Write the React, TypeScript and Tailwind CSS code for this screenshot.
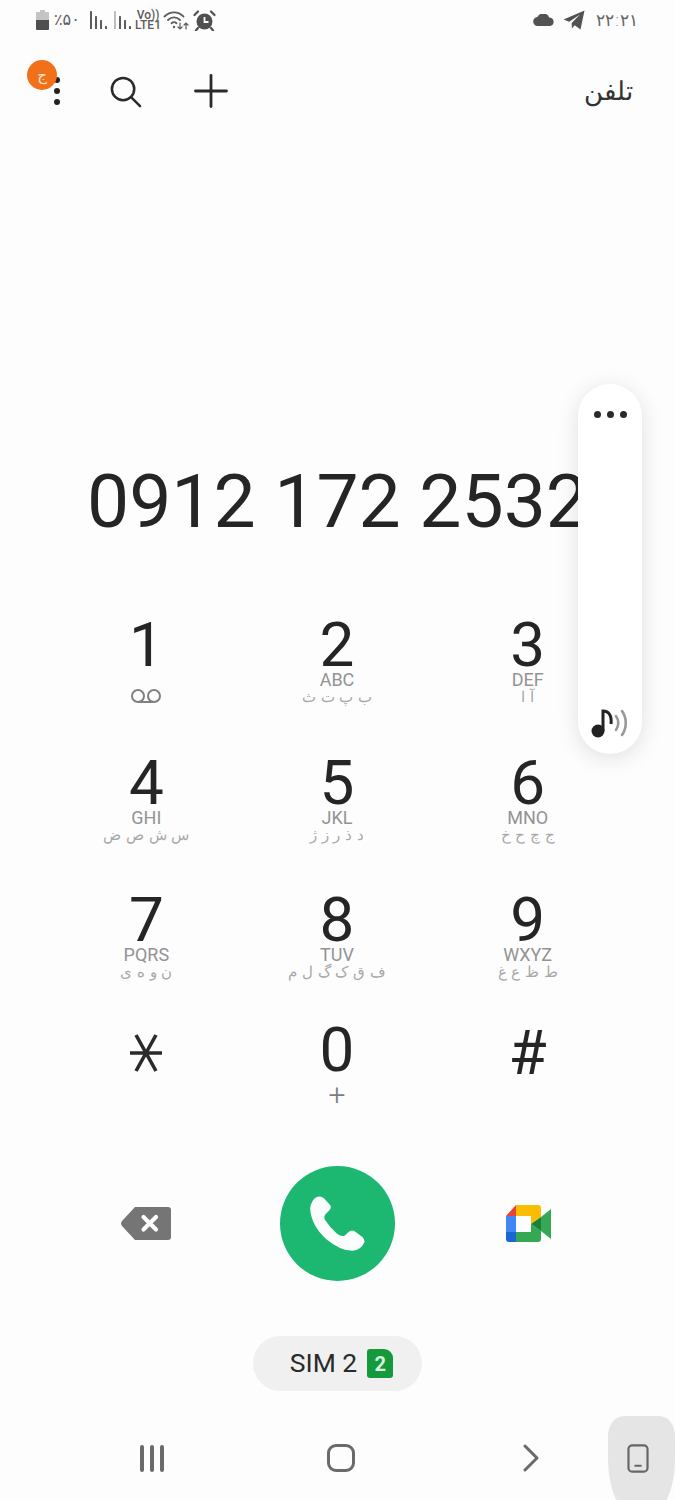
import React from "react";

const sans = "font-['Roboto','Liberation_Sans',sans-serif]";
const arabic = "font-['DejaVu_Sans','Noto_Sans',sans-serif]";

function Battery() {
  return (
    <svg width="16" height="20" viewBox="0 0 16 20">
      <path d="M5 0h5v2h3a1 1 0 0 1 1 1v7H1V3a1 1 0 0 1 1-1h3z" fill="#c4c4c4" />
      <path d="M1 10h13v9a1 1 0 0 1-1 1H2a1 1 0 0 1-1-1z" fill="#4f4f4f" />
    </svg>
  );
}

function Signal({ light }: { light?: boolean }) {
  return (
    <svg width="19" height="18" viewBox="0 0 19 18" fill="#5c5c5c">
      <rect x="1" y="0" width="2" height="18" fill={light ? "#bdbdbd" : "#5c5c5c"} rx="0.5" />
      <rect x="6" y="5" width="2" height="13" rx="0.5" />
      <rect x="11" y="9" width="2" height="9" rx="0.5" />
      <rect x="16" y="15" width="2" height="3" rx="0.5" />
    </svg>
  );
}

function Wifi() {
  return (
    <svg width="26" height="20" viewBox="0 0 26 20" fill="none" stroke="#5c5c5c" strokeLinecap="round">
      <path d="M1.500 6.500C7 1 15 1 20.500 6.500" strokeWidth="1.800" />
      <path d="M5 10c3.500-3.400 8.500-3.400 12 0" strokeWidth="1.800" />
      <path d="M8.500 13.200c1.600-1.400 3.400-1.400 5 0" strokeWidth="1.800" />
      <circle cx="11" cy="17" r="1.200" fill="#5c5c5c" stroke="none" />
      <path d="M17 13v6M15 17l2 2 2-2" strokeWidth="1.200" />
      <path d="M23 19v-6M21 15l2-2 2 2" strokeWidth="1.200" />
    </svg>
  );
}

function Alarm() {
  return (
    <svg width="23" height="21" viewBox="0 0 23 21">
      <circle cx="11.500" cy="11.500" r="8" fill="#505050" />
      <path d="M11.500 7v5h4" fill="none" stroke="#fff" strokeWidth="1.800" />
      <path d="M1.500 5 5 1.500M21.500 5 18 1.500M5 18l-2 2.500M18 18l2 2.500" stroke="#505050" strokeWidth="2.200" strokeLinecap="round" />
    </svg>
  );
}

function Cloud() {
  return (
    <svg width="22" height="12" viewBox="0 0 22 12" fill="#525252">
      <path d="M5 12a4.500 4.500 0 0 1-.6-9A6.500 6.500 0 0 1 16.200 3.400 4.400 4.400 0 0 1 17.500 12z" />
    </svg>
  );
}

function Telegram() {
  return (
    <svg width="22" height="20" viewBox="0 0 22 20" fill="#525252">
      <path d="M21.500 .5 17.500 19.500 11.700 15.300 8.900 18.500 8.700 13 17 4.500 6.200 11.700 .5 9.600z" />
    </svg>
  );
}

function Voicemail() {
  return (
    <svg width="32" height="14" viewBox="0 0 32 14" fill="none" stroke="#808080" strokeWidth="2">
      <circle cx="8" cy="7" r="6" />
      <circle cx="24" cy="7" r="6" />
      <path d="M8 13h16" />
    </svg>
  );
}

function Star() {
  return (
    <svg className="mt-[5px]" width="32" height="38" viewBox="0 0 32 38" fill="none" stroke="#2a2a2a" strokeWidth="3.600">
      <path d="M6 1 26 37M26 1 6 37M0 19h32" />
    </svg>
  );
}

function Backspace() {
  return (
    <svg className="mr-[2px]" width="50" height="33" viewBox="0 0 50 33">
      <path d="M14 0h33a3 3 0 0 1 3 3v27a3 3 0 0 1-3 3H14L1 19a4 4 0 0 1 0-5z" fill="#757575" />
      <path d="M22.500 10 35 22.500M35 10 22.500 22.500" stroke="#fff" strokeWidth="4.200" strokeLinecap="round" />
    </svg>
  );
}

function Handset() {
  return (
    <svg className="mr-[2px]" width="62" height="62" viewBox="620 130 180 180" fill="#fbfdfc">
      <path d="M650 142Q635 150 632 175Q635 225 680 265Q720 298 755 298Q780 295 790 272Q790 262 780 255L760 240Q750 236 742 245L732 254Q722 257 710 248Q690 232 675 208Q670 198 678 190L688 180Q695 172 690 165L672 145Q662 137 650 142Z" />
    </svg>
  );
}

function Meet() {
  return (
    <svg width="46" height="38" viewBox="0 0 46 38">
      <path d="M0 11 10 0V11z" fill="#ea4335" />
      <path d="M0 11h10v16H0z" fill="#4285f4" />
      <path d="M0 27h10v10H3a3 3 0 0 1-3-3z" fill="#1967d2" />
      <path d="M10 0h22a3 3 0 0 1 3 3v9L25 19v-8H10z" fill="#fbbc04" />
      <path d="M10 27h15v-8l10 7v8a3 3 0 0 1-3 3H10z" fill="#34a853" />
      <path d="M25 19 35 12v14z" fill="#188038" />
      <path d="M35 12 45 4v30L35 26z" fill="#34a853" />
    </svg>
  );
}

function SimChip() {
  return (
    <div className="relative flex h-[29px] w-[26px] items-center justify-center rounded-[3px] rounded-tr-[9px] bg-[#149a3c]">
      <span className={`${sans} text-[20px] leading-none font-bold text-[#d8f3de]`}>2</span>
    </div>
  );
}

type K = { d: React.ReactNode; en?: string; fa?: string; sub?: React.ReactNode };

function Key({ d, en, fa, sub }: K) {
  return (
    <div className="flex flex-col items-center">
      <div className={`${sans} flex h-[62px] items-center text-[62px] leading-[62px] font-normal text-[#252525]`}>{d}</div>
      {en && <div className={`${sans} -mt-[5px] h-[18px] text-[18px] leading-[18px] font-normal text-[#939393]`}>{en}</div>}
      {fa && (
        <div dir="rtl" className={`${arabic} h-[16px] text-[15px] leading-[16px] font-extralight text-[#a8a8a8] whitespace-nowrap`}>
          {fa}
        </div>
      )}
      {sub}
    </div>
  );
}

const rows: { h: string; keys: K[] }[] = [
  {
    h: "h-[138px]",
    keys: [
      { d: "1", sub: <div className="mt-[13px]"><Voicemail /></div> },
      { d: "2", en: "ABC", fa: "ب پ ت ث" },
      { d: "3", en: "DEF", fa: "آ ا" },
    ],
  },
  {
    h: "h-[137px]",
    keys: [
      { d: "4", en: "GHI", fa: "س ش ص ض" },
      { d: "5", en: "JKL", fa: "د ذ ر ز ژ" },
      { d: "6", en: "MNO", fa: "ج چ ح خ" },
    ],
  },
  {
    h: "h-[130px]",
    keys: [
      { d: "7", en: "PQRS", fa: "ن و ه ی" },
      { d: "8", en: "TUV", fa: "ف ق ک گ ل م" },
      { d: "9", en: "WXYZ", fa: "ط ظ ع غ" },
    ],
  },
  {
    h: "h-[140px]",
    keys: [
      { d: <Star /> },
      {
        d: "0",
        sub: <div className={`${sans} -mt-[1px] text-[30px] leading-[30px] font-light text-[#7c7c7c]`}>+</div>,
      },
      { d: <span className="mt-[6px]">#</span> },
    ],
  },
];

export default function App() {
  return (
    <div className="relative flex h-[1500px] w-[675px] flex-col overflow-hidden bg-[#fdfdfd]">
      {/* status bar */}
      <div className="flex h-[40px] items-center justify-between pr-[37px] pl-[35px]">
        <div className="flex items-center">
          <Battery />
          <span className={`${arabic} ml-[3px] w-[32px] text-left text-[16px] leading-none text-[#5c5c5c]`}>
            <bdi dir="rtl">٪۵۰</bdi>
          </span>
          <div className="ml-[3px]"><Signal /></div>
          <div className="ml-[5px]"><Signal light /></div>
          <div className={`${sans} ml-[3px] flex w-[26px] flex-col items-center text-[12px] leading-[10px] font-medium text-[#5c5c5c]`}>
            <span>Vo))</span>
            <span>LTE1</span>
          </div>
          <div className="ml-[2px]"><Wifi /></div>
          <div className="ml-[4px]"><Alarm /></div>
        </div>
        <div className="flex items-center">
          <Cloud />
          <div className="ml-[8px]"><Telegram /></div>
          <span className={`${arabic} ml-[11px] text-[17px] leading-none font-extralight text-[#666]`}>۲۲:۲۱</span>
        </div>
      </div>

      {/* action bar */}
      <div className="relative flex h-[102px] items-center pr-[42px] pl-[54px]">
        <div className="flex w-[6px] flex-col items-center gap-[5px]">
          <span className="h-[6px] w-[6px] rounded-full bg-[#222]" />
          <span className="h-[6px] w-[6px] rounded-full bg-[#222]" />
          <span className="h-[6px] w-[6px] rounded-full bg-[#222]" />
        </div>
        <svg className="ml-[49px]" width="33" height="33" viewBox="0 0 34 34" fill="none" stroke="#2a2a2a" strokeWidth="2.600" strokeLinecap="round">
          <circle cx="14.500" cy="14.500" r="11.500" />
          <path d="M23 23 32 32" />
        </svg>
        <svg className="ml-[52px]" width="34" height="34" viewBox="0 0 34 34" fill="none" stroke="#2a2a2a" strokeWidth="2.800" strokeLinecap="round">
          <path d="M17 1.500v31M1.500 17h31" />
        </svg>
        <span dir="rtl" className={`${arabic} ml-auto text-[26px] leading-none font-extralight text-[#333]`}>
          تلفن
        </span>
        <div className="absolute top-[20px] left-[27px] flex h-[30px] w-[30px] items-center justify-center rounded-full bg-[#f3701a]">
          <span className={`${arabic} text-[15px] leading-none text-[#fde7d6]`}>ج</span>
        </div>
      </div>

      {/* number */}
      <div className={`${sans} mt-[314px] flex h-[90px] items-center justify-center text-[75px] leading-[90px] font-normal whitespace-nowrap text-[#252525]`}>
        0912 172 2532
      </div>

      {/* keypad */}
      <div className="mt-[68px] grid grid-cols-3 pr-[52px] pl-[51px]">
        {rows.map((r) =>
          r.keys.map((k, i) => (
            <div key={i} className={r.h}>
              <Key {...k} />
            </div>
          )),
        )}
      </div>

      {/* call row */}
      <div className="mt-[7px] grid h-[115px] grid-cols-3 items-center pr-[51px] pl-[51px]">
        <div className="flex justify-center"><Backspace /></div>
        <div className="flex justify-center">
          <div className="flex h-[115px] w-[115px] items-center justify-center rounded-full bg-[#1cb871]">
            <Handset />
          </div>
        </div>
        <div className="flex justify-center"><Meet /></div>
      </div>

      {/* sim */}
      <div className="mt-[55px] flex justify-center">
        <div className="flex h-[55px] w-[169px] items-center justify-center gap-[10px] rounded-full bg-[#f0f0f0] pl-[8px]">
          <span className={`${sans} text-[26.500px] leading-none font-normal text-[#2a2a2a]`}>SIM 2</span>
          <SimChip />
        </div>
      </div>

      {/* nav */}
      <div className="mt-[25px] flex h-[84px] items-start">
        <div className="flex h-[84px] flex-1 items-center">
          <div className="ml-[140px] flex gap-[6px]">
            <span className="h-[27px] w-[4px] rounded-full bg-[#6a6a6a]" />
            <span className="h-[27px] w-[4px] rounded-full bg-[#6a6a6a]" />
            <span className="h-[27px] w-[4px] rounded-full bg-[#6a6a6a]" />
          </div>
          <span className="ml-[163px] h-[28px] w-[28px] rounded-[9px] border-[3px] border-[#6a6a6a]" />
          <svg className="ml-[168px]" width="16" height="28" viewBox="0 0 16 28" fill="none" stroke="#6a6a6a" strokeWidth="3" strokeLinecap="round" strokeLinejoin="round">
            <path d="M2 2 14 14 2 26" />
          </svg>
        </div>
        <div className="flex h-[104px] w-[67px] justify-center rounded-[16px_16px_33px_33px/20px_20px_60px_60px] bg-[#e5e5e5] pt-[28px] pr-[8px]">
          <svg width="24" height="29" viewBox="0 0 24 32" fill="none" stroke="#666" strokeWidth="2.400">
            <rect x="1.500" y="1.500" width="21" height="29" rx="4" />
            <path d="M9 24h6" strokeLinecap="round" />
          </svg>
        </div>
      </div>

      {/* floating panel */}
      <div className="absolute top-[384px] left-[578px] flex h-[370px] w-[64px] flex-col items-center justify-between rounded-full bg-white pt-[27px] pb-[16px] shadow-[0_4px_22px_rgba(0,0,0,0.12)]">
        <div className="flex gap-[6px]">
          <span className="h-[7px] w-[7px] rounded-full bg-[#2a2a2a]" />
          <span className="h-[7px] w-[7px] rounded-full bg-[#2a2a2a]" />
          <span className="h-[7px] w-[7px] rounded-full bg-[#2a2a2a]" />
        </div>
        <svg width="38" height="30" viewBox="0 0 38 30" fill="none">
          <circle cx="7" cy="23" r="6.500" fill="#222" />
          <path d="M12 23V3c6 0 9 5 8 13" stroke="#222" strokeWidth="3" />
          <path d="M25 8c3 4 3 10 0 14" stroke="#999" strokeWidth="2.600" strokeLinecap="round" />
          <path d="M31 3c5 7 5 17 0 24" stroke="#999" strokeWidth="2.600" strokeLinecap="round" />
        </svg>
      </div>
    </div>
  );
}
